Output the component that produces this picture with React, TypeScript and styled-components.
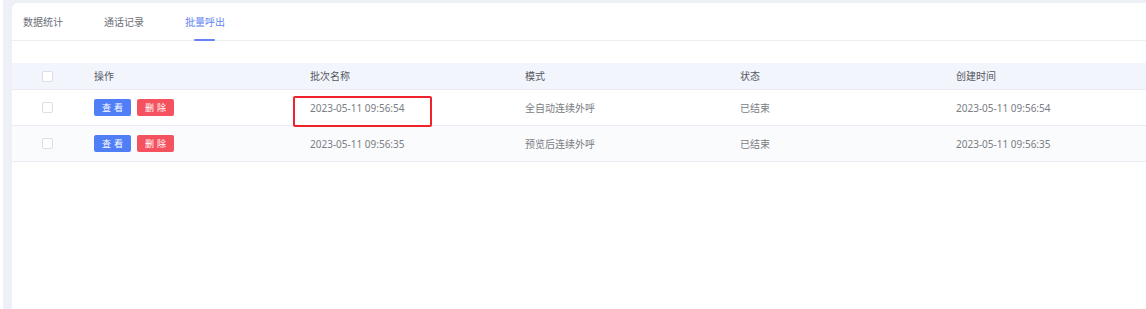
import React from "react";
import styled, { createGlobalStyle } from "styled-components";

const Global = createGlobalStyle`
  html, body { margin: 0; padding: 0; background: #ffffff; }
  body { font-family: "Noto Sans", "Noto Sans CJK SC", sans-serif; }
  * { box-sizing: border-box; }
`;

const Page = styled.div`
  display: flex;
  min-height: 309px;
  height: 100vh;
  background: #ffffff;
  padding-left: 3px;
`;

const Backdrop = styled.div`
  flex: 1;
  display: flex;
  background: #eef0f7;
  padding: 3px 0 0 9px;
`;

const Panel = styled.div`
  flex: 1;
  background: #ffffff;
  border-top-left-radius: 6px;
  display: flex;
  flex-direction: column;
`;

const TabBar = styled.div`
  display: flex;
  height: 38px;
  padding-left: 11px;
  gap: 42px;
  border-bottom: 1px solid #eceef2;
`;

const Tab = styled.div<{ $active?: boolean }>`
  position: relative;
  display: flex;
  align-items: center;
  height: 100%;
  font-size: 10px;
  line-height: 1;
  color: ${(p) => (p.$active ? "#6384f2" : "#6b6e75")};
  width: 39px;
  white-space: nowrap;
  &::after {
    content: "";
    display: ${(p) => (p.$active ? "block" : "none")};
    position: absolute;
    left: 9px;
    width: 21px;
    bottom: -1px;
    height: 2px;
    border-radius: 1px;
    background: #6384f2;
  }
`;

const Table = styled.div`
  margin-top: 22px;
  display: flex;
  flex-direction: column;
`;

const Row = styled.div<{ $kind: "head" | "odd" | "even" }>`
  display: grid;
  grid-template-columns: 68px 216px 215px 215px 216px 1fr;
  align-items: stretch;
  height: ${(p) => (p.$kind === "head" ? "27px" : "36px")};
  background: ${(p) =>
    p.$kind === "head" ? "#f2f5fc" : p.$kind === "even" ? "#fafbfd" : "#ffffff"};
  border-bottom: 1px solid #e9ebf0;
`;

const Cell = styled.div<{ $head?: boolean }>`
  position: relative;
  display: flex;
  align-items: center;
  gap: 6px;
  padding-left: 14px;
  font-size: 10px;
  line-height: 1;
  white-space: nowrap;
  color: ${(p) => (p.$head ? "#55585f" : "#7a7d83")};
`;

const CheckCell = styled.div`
  display: flex;
  align-items: center;
  padding-left: 30px;
`;

const Check = styled.span`
  display: block;
  width: 11px;
  height: 11px;
  border: 1px solid #dcdfe6;
  border-radius: 2px;
  background: #ffffff;
`;

const Btn = styled.button<{ $variant: "blue" | "red" }>`
  border: none;
  border-radius: 2px;
  width: 37px;
  height: 17px;
  padding: 0 0 0 3px;
  font-family: inherit;
  font-size: 9px;
  letter-spacing: 3px;
  line-height: 17px;
  color: #ffffff;
  background: ${(p) => (p.$variant === "blue" ? "#4f7ef7" : "#f4525e")};
`;

const Highlight = styled.div`
  position: absolute;
  left: -3px;
  top: 6px;
  width: 139px;
  height: 31px;
  border: 2px solid #f0232a;
  border-radius: 2px;
  pointer-events: none;
`;

const rows = [
  { name: "2023-05-11 09:56:54", mode: "全自动连续外呼", state: "已结束", time: "2023-05-11 09:56:54", mark: true },
  { name: "2023-05-11 09:56:35", mode: "预览后连续外呼", state: "已结束", time: "2023-05-11 09:56:35", mark: false },
];

export default function App() {
  return (
    <>
      <Global />
      <Page>
        <Backdrop>
          <Panel>
            <TabBar>
              <Tab>数据统计</Tab>
              <Tab>通话记录</Tab>
              <Tab $active>批量呼出</Tab>
            </TabBar>
            <Table>
              <Row $kind="head">
                <CheckCell><Check /></CheckCell>
                <Cell $head>操作</Cell>
                <Cell $head>批次名称</Cell>
                <Cell $head>模式</Cell>
                <Cell $head>状态</Cell>
                <Cell $head>创建时间</Cell>
              </Row>
              {rows.map((r, i) => (
                <Row key={i} $kind={i % 2 === 0 ? "odd" : "even"}>
                  <CheckCell><Check /></CheckCell>
                  <Cell>
                    <Btn $variant="blue">查看</Btn>
                    <Btn $variant="red">删除</Btn>
                  </Cell>
                  <Cell>
                    {r.name}
                    {r.mark && <Highlight />}
                  </Cell>
                  <Cell>{r.mode}</Cell>
                  <Cell>{r.state}</Cell>
                  <Cell>{r.time}</Cell>
                </Row>
              ))}
            </Table>
          </Panel>
        </Backdrop>
      </Page>
    </>
  );
}
